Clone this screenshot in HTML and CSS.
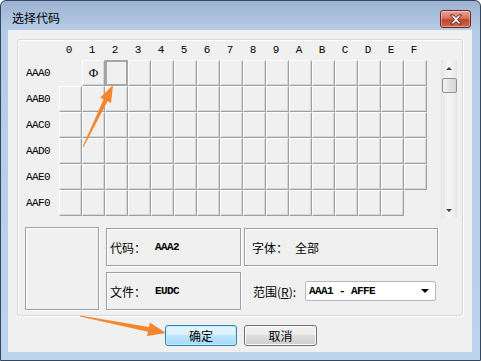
FILE: index.html
```html
<!DOCTYPE html>
<html>
<head>
    <title>选择代码</title>
    <link rel="stylesheet" href="styles.css">
</head>
<body>
    <div class="window">
        <div class="titlebar">
            <span class="title">选择代码</span>
            <div class="close-button">
                <svg width="14" height="11" viewBox="0 0 14 11">
                    <path d="M1.5 1 L4.5 1 L7 3.5 L9.5 1 L12.5 1 L8.5 5.5 L12.5 10 L9.5 10 L7 7.5 L4.5 10 L1.5 10 L5.5 5.5 Z" fill="#fff" stroke="#5a2a22" stroke-width="1"/>
                </svg>
            </div>
        </div>

        <div class="client">
            <div class="group-box">
                <div class="chart">
                    <div class="code-grid" id="codeGrid"></div>
                    <div class="scrollbar">
                        <div class="scroll-up"></div>
                        <div class="scroll-thumb"></div>
                        <div class="scroll-down"></div>
                    </div>
                </div>

                <div class="info">
                    <div class="preview"></div>
                    <div class="info-box">
                        <span class="info-label">代码：</span><span class="info-value">AAA2</span>
                    </div>
                    <div class="info-box font-box">
                        <span class="info-label">字体：</span><span class="info-text">全部</span>
                    </div>
                    <div class="info-box">
                        <span class="info-label">文件：</span><span class="info-value">EUDC</span>
                    </div>
                    <div class="range-row">
                        <span class="range-label">范围(<u>R</u>):</span>
                        <div class="combo">
                            <span class="combo-text">AAA1 - AFFE</span>
                            <span class="combo-arrow"></span>
                        </div>
                    </div>
                </div>
            </div>

            <div class="buttons">
                <button class="dialog-button default-button">确定</button>
                <button class="dialog-button">取消</button>
            </div>
        </div>

        <svg class="arrows" width="481" height="361" viewBox="0 0 481 361">
            <polygon fill="#f5862e" points="82.6,146.8 103.6,99.3 100.2,97.7 113,85 111,102.9 107.6,101.3 83.4,147.2"/>
            <polygon fill="#f5862e" points="80.1,315.5 148.9,326.9 149.8,322.4 166,333 147,336.1 147.9,331.7 79.9,316.5"/>
        </svg>
    </div>

    <script>
        const hexDigits = '0123456789ABCDEF';
        const rowNames = ['AAA0', 'AAB0', 'AAC0', 'AAD0', 'AAE0', 'AAF0'];
        const grid = document.getElementById('codeGrid');

        function addItem(className, text) {
            const item = document.createElement('div');
            item.className = className;
            if (text) item.textContent = text;
            grid.appendChild(item);
        }

        addItem('corner');
        for (const digit of hexDigits) {
            addItem('col-head', digit);
        }

        rowNames.forEach(function (name, row) {
            addItem('row-head', name);
            for (let col = 0; col < 16; col++) {
                if (row === 0 && col === 0) {
                    addItem('empty');
                } else if (row === 5 && col === 15) {
                    addItem('empty');
                } else if (row === 0 && col === 1) {
                    addItem('cell glyph', 'Φ');
                } else if (row === 0 && col === 2) {
                    addItem('cell selected');
                } else {
                    addItem('cell');
                }
            }
        });
    </script>
</body>
</html>
```

FILE: styles.css
```css
body {
    margin: 0;
    width: 481px;
    height: 361px;
    overflow: hidden;
    font-family: "Noto Sans CJK SC", sans-serif;
    font-size: 12px;
    color: #000;
}

/* Window frame */
.window {
    position: relative;
    box-sizing: border-box;
    width: 481px;
    height: 361px;
    border: 1px solid #34475e;
    border-radius: 6px 6px 0 0;
    background: linear-gradient(#9cb3d1, #b6cce6 29px, #bcd3ec);
    display: flex;
    flex-direction: column;
}

.titlebar {
    height: 29px;
    display: flex;
    align-items: flex-start;
    justify-content: space-between;
}

.title {
    margin: 10px 0 0 11px;
    line-height: 14px;
}

.close-button {
    box-sizing: border-box;
    width: 31px;
    height: 18px;
    margin: 9px 9px 0 0;
    border: 1px solid #6d2a20;
    border-radius: 3px;
    background: linear-gradient(#e7a595, #d4725e 45%, #c0442d 55%, #cf6a4f);
    box-shadow: inset 0 0 0 1px rgba(255, 255, 255, 0.35);
    display: flex;
    align-items: center;
    justify-content: center;
}

.client {
    flex: 1;
    margin: 0 8px 8px 7px;
    background-color: #f0f0f0;
}

/* Group box holding the code chart */
.group-box {
    box-sizing: border-box;
    width: 446px;
    height: 277px;
    margin: 9px 0 0 9px;
    padding-left: 7px;
    border: 1px solid #d5d9dd;
    border-radius: 3px;
    box-shadow: inset 1px 1px 0 #fff, 1px 1px 0 #fff;
}

.chart {
    display: flex;
}

.code-grid {
    display: grid;
    grid-template-columns: 34px repeat(16, 23px);
    grid-template-rows: 20px repeat(6, 26px);
}

.col-head {
    font-family: "Liberation Mono", monospace;
    font-size: 11px;
    line-height: 20px;
    text-align: center;
    padding-right: 3px;
}

.row-head {
    font-family: "Liberation Mono", monospace;
    font-size: 11px;
    letter-spacing: -0.6px;
    line-height: 26px;
    padding-left: 1px;
}

.cell {
    box-sizing: border-box;
    border-top: 1px solid #fff;
    border-left: 1px solid #fff;
    border-right: 1px solid #a0a0a0;
    border-bottom: 1px solid #a0a0a0;
    box-shadow: inset -1px -1px 0 #d6d6d6;
}

.glyph {
    font-family: "Liberation Serif", serif;
    font-size: 13px;
    text-align: center;
    line-height: 24px;
}

.selected {
    border: 2px solid #a6a6a6;
    box-shadow: none;
}

/* Vertical scrollbar */
.scrollbar {
    box-sizing: border-box;
    width: 16px;
    height: 158px;
    margin: 20px 0 0 14px;
    border-left: 1px solid #e4e4e4;
    border-right: 1px solid #e4e4e4;
    background: linear-gradient(90deg, #e9e9e9, #f5f5f5 50%, #e9e9e9);
    display: flex;
    flex-direction: column;
    align-items: center;
}

.scroll-up,
.scroll-down {
    width: 0;
    height: 0;
    border-left: 3px solid transparent;
    border-right: 3px solid transparent;
}

.scroll-up {
    margin-top: 7px;
    border-bottom: 3px solid #404040;
}

.scroll-down {
    margin-top: auto;
    margin-bottom: 6px;
    border-top: 3px solid #404040;
}

.scroll-thumb {
    box-sizing: border-box;
    width: 15px;
    height: 15px;
    margin-top: 8px;
    border: 1px solid #8f8f8f;
    border-radius: 2px;
    background: linear-gradient(90deg, #f4f4f4, #e2e2e2 50%, #d4d4d4);
}

/* Lower information panels */
.info {
    display: grid;
    grid-template-columns: 74px 142px 197px;
    grid-template-rows: 38px 38px;
    row-gap: 6px;
    margin-top: 10px;
}

.preview {
    grid-row: 1 / 3;
    margin-top: -1px;
    border: 1px solid #a0a0a0;
    box-shadow: inset 1px 1px 0 #fff, 1px 1px 0 #fff;
}

.info-box {
    margin-left: 7px;
    padding-left: 3px;
    border: 1px solid #a0a0a0;
    box-shadow: inset 1px 1px 0 #fff, 1px 1px 0 #fff;
    display: flex;
    align-items: center;
}

.font-box {
    margin-left: 3px;
    padding-left: 7px;
}

.info-value {
    margin-left: 9px;
    font-family: "Liberation Mono", monospace;
    font-weight: bold;
    font-size: 11px;
    letter-spacing: -0.6px;
}

.info-text {
    margin-left: 7px;
}

.range-row {
    margin-left: 3px;
    padding-left: 9px;
    display: flex;
    align-items: center;
}

.range-label {
    width: 52px;
}

.combo {
    box-sizing: border-box;
    width: 131px;
    height: 20px;
    border: 1px solid #b5b8be;
    border-radius: 2px;
    background-color: #fff;
    display: flex;
    align-items: center;
    padding: 0 6px 0 3px;
}

.combo-text {
    flex: 1;
    font-family: "Liberation Mono", monospace;
    font-weight: bold;
    font-size: 11px;
    letter-spacing: -0.6px;
}

.combo-arrow {
    width: 0;
    height: 0;
    border-left: 4px solid transparent;
    border-right: 4px solid transparent;
    border-top: 4px solid #000;
}

/* Bottom buttons */
.buttons {
    display: flex;
    gap: 7px;
    margin-top: 9px;
    padding-left: 157px;
}

.dialog-button {
    box-sizing: border-box;
    width: 73px;
    height: 21px;
    padding: 0;
    font-family: "Noto Sans CJK SC", sans-serif;
    font-size: 12px;
    color: #000;
    border: 1px solid #707070;
    border-radius: 3px;
    background: linear-gradient(#f2f2f2, #ebebeb 50%, #dddddd 50%, #cfcfcf);
    box-shadow: inset 0 0 0 1px #fcfcfc;
}

.default-button {
    width: 72px;
    border-color: #3c7fb1;
    background: linear-gradient(#e8f5fc, #d9f0fc 50%, #bee6fd 50%, #a7d9f5);
    box-shadow: inset 0 0 0 1px #aef0ff;
}

.arrows {
    position: absolute;
    top: -1px;
    left: -1px;
    pointer-events: none;
}
```
